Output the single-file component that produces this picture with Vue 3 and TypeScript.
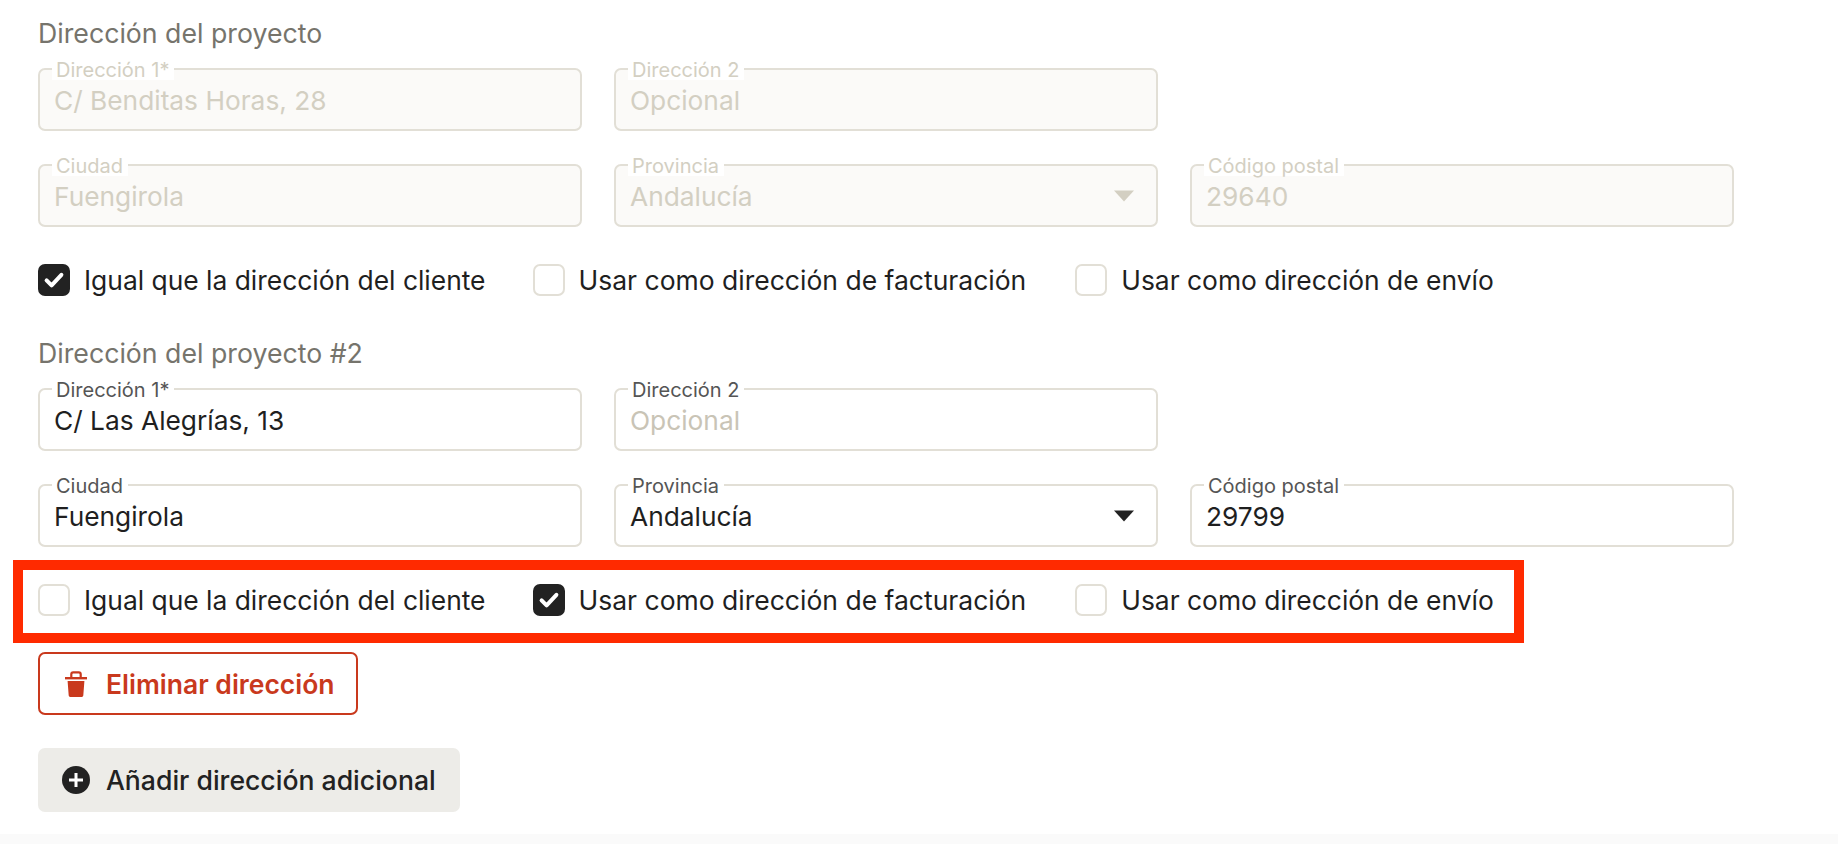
<template>
  <div class="page">
    <main class="content">
      <section v-for="block in blocks" :key="block.title" class="block">
        <h2 class="block-title">{{ block.title }}</h2>
        <div class="fields">
          <div
            v-for="field in block.fields"
            :key="field.label"
            :class="['field', { disabled: block.disabled, 'first-in-row': field.newRow }]"
          >
            <span class="field-label">{{ field.label }}</span>
            <span :class="['field-value', { placeholder: field.placeholder }]">{{ field.value }}</span>
            <svg v-if="field.select" class="caret" width="20" height="12" viewBox="0 0 20 12">
              <path d="M0 0.5h20L10 11.5z" />
            </svg>
          </div>
        </div>
        <div class="checks">
          <label v-for="(check, i) in checkLabels" :key="check" class="check">
            <span :class="['box', { checked: block.checked === i }]">
              <svg v-if="block.checked === i" width="22" height="18" viewBox="0 0 22 18">
                <path
                  d="M3.6 9.4l5 5L18.4 3.8"
                  fill="none"
                  stroke="#fff"
                  stroke-width="4"
                  stroke-linecap="round"
                  stroke-linejoin="round"
                />
              </svg>
            </span>
            {{ check }}
          </label>
          <div v-if="block.highlight" class="highlight"></div>
        </div>
      </section>

      <button class="btn btn-danger" type="button">
        <svg width="28" height="26" viewBox="-3 0 28 26">
          <path d="M0 6h22v2.4H0z" />
          <path d="M5.2 6V3.2A3 3 0 0 1 8.2.2h5.6a3 3 0 0 1 3 3V6h-2.2V3.2a.8.8 0 0 0-.8-.8H8.2a.8.8 0 0 0-.8.8V6z" />
          <path d="M2.6 10h16.8l-1.1 14.5a1.5 1.5 0 0 1-1.5 1.4H5.2a1.5 1.5 0 0 1-1.5-1.4z" />
        </svg>
        Eliminar dirección
      </button>

      <button class="btn btn-add" type="button">
        <svg width="28" height="28" viewBox="0 0 28 28">
          <circle cx="14" cy="14" r="14" fill="#222" />
          <path d="M12.5 7h3v5.5H21v3h-5.5V21h-3v-5.5H7v-3h5.5z" fill="#fff" />
        </svg>
        Añadir dirección adicional
      </button>
    </main>
    <div class="bottom-strip"></div>
  </div>
</template>

<script setup lang="ts">
interface Field {
  label: string;
  value: string;
  placeholder?: boolean;
  select?: boolean;
  newRow?: boolean;
}

interface Block {
  title: string;
  disabled: boolean;
  checked: number;
  highlight: boolean;
  fields: Field[];
}

const checkLabels = [
  "Igual que la dirección del cliente",
  "Usar como dirección de facturación",
  "Usar como dirección de envío",
];

const blocks: Block[] = [
  {
    title: "Dirección del proyecto",
    disabled: true,
    checked: 0,
    highlight: false,
    fields: [
      { label: "Dirección 1*", value: "C/ Benditas Horas, 28" },
      { label: "Dirección 2", value: "Opcional", placeholder: true },
      { label: "Ciudad", value: "Fuengirola", newRow: true },
      { label: "Provincia", value: "Andalucía", select: true },
      { label: "Código postal", value: "29640" },
    ],
  },
  {
    title: "Dirección del proyecto #2",
    disabled: false,
    checked: 1,
    highlight: true,
    fields: [
      { label: "Dirección 1*", value: "C/ Las Alegrías, 13" },
      { label: "Dirección 2", value: "Opcional", placeholder: true },
      { label: "Ciudad", value: "Fuengirola", newRow: true },
      { label: "Provincia", value: "Andalucía", select: true },
      { label: "Código postal", value: "29799" },
    ],
  },
];
</script>

<style>
html,
body {
  margin: 0;
  background: #fff;
  overflow: hidden;
}
</style>

<style scoped>
.page {
  height: 844px;
  display: flex;
  flex-direction: column;
  font-family: Inter, "Liberation Sans", sans-serif;
  color: #1f1f1f;
}

.content {
  flex: 1;
  padding: 18px 0 0 38px;
  display: flex;
  flex-direction: column;
  align-items: flex-start;
}

.block {
  margin-bottom: 42px;
}

.block:nth-of-type(2) {
  margin-bottom: 36px;
}

.block + .btn {
  margin-bottom: 33px;
}

.block-title {
  margin: 0 0 20px;
  font-size: 26.7px;
  line-height: 30px;
  font-weight: 400;
  color: #76746c;
}

.fields {
  display: grid;
  grid-template-columns: repeat(3, 544px);
  column-gap: 32px;
  row-gap: 33px;
}

.first-in-row {
  grid-column: 1;
}

.field {
  position: relative;
  height: 63px;
  box-sizing: border-box;
  border: 2px solid #e2dfd6;
  border-radius: 7px;
  padding: 16px 14px 0;
  background: #fff;
}

.field-label {
  position: absolute;
  top: -10px;
  left: 12px;
  padding: 0 5px 0 4px;
  background: #fff;
  font-size: 20px;
  line-height: 20px;
  color: #555;
}

.field-value {
  font-size: 26.3px;
  line-height: 30px;
}

.placeholder {
  color: #c9c4b6;
}

.caret {
  position: absolute;
  right: 22px;
  top: 24px;
  fill: #222;
}

.field.disabled {
  background: #fbfaf8;
}

.field.disabled .field-label,
.field.disabled .field-value {
  color: #d3cfc2;
}

.field.disabled .caret {
  fill: #d3cfc2;
}

.checks {
  position: relative;
  margin-top: 37px;
  display: flex;
  gap: 47px;
}

.check {
  display: flex;
  align-items: center;
  gap: 14px;
  height: 32px;
  font-size: 26.4px;
  white-space: nowrap;
}

.check:nth-child(2) {
  margin-right: 2px;
  font-size: 26.5px;
}

.box {
  width: 32px;
  height: 32px;
  box-sizing: border-box;
  border: 2px solid #e2dfd6;
  border-radius: 7px;
  background: #fff;
  display: flex;
  align-items: center;
  justify-content: center;
}

.box.checked {
  background: #222;
  border-color: #222;
}

.highlight {
  position: absolute;
  left: -25px;
  top: -24px;
  width: 1511px;
  height: 83px;
  box-sizing: border-box;
  border: 10px solid #ff2a00;
  pointer-events: none;
}

.btn {
  display: flex;
  align-items: center;
  gap: 16px;
  height: 64px;
  padding: 0 24px;
  box-sizing: border-box;
  border-radius: 7px;
  font-family: inherit;
  font-size: 26.6px;
  font-weight: 550;
}

.btn-danger {
  height: 63px;
  padding: 0 21px 0 22px;
  background: #fff;
  border: 2px solid #c9391d;
  color: #c9391d;
  font-size: 26.5px;
  font-weight: 600;
}

.btn-danger svg {
  fill: #c9391d;
}

.btn-add {
  background: #edece8;
  border: none;
  color: #222;
}

.bottom-strip {
  height: 10px;
  background: #fafafa;
}
</style>
